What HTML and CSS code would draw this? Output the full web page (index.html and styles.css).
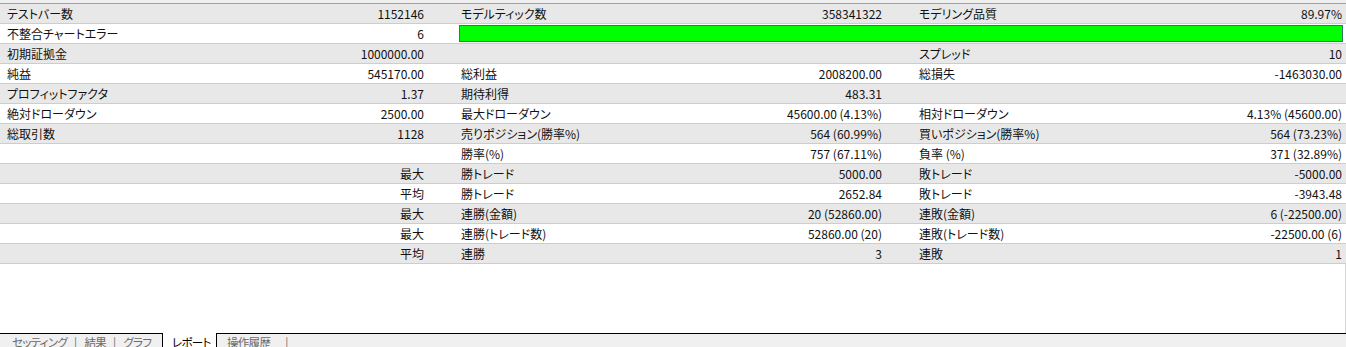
FILE: index.html
```html
<!DOCTYPE html>
<html lang="ja">
<head>
<meta charset="utf-8">
<title>レポート</title>
<link rel="stylesheet" href="styles.css">
</head>
<body>
<div class="top"></div>
<div class="report">
  <div class="row alt">
    <div class="l">テストバー数</div><div class="v">1152146</div>
    <div class="l2">モデルティック数</div><div class="v">358341322</div>
    <div class="l2">モデリング品質</div><div class="v3">89.97%</div>
  </div>
  <div class="row">
    <div class="l">不整合チャートエラー</div><div class="v">6</div>
    <div class="bar"></div>
  </div>
  <div class="row alt">
    <div class="l">初期証拠金</div><div class="v">1000000.00</div>
    <div class="l2"></div><div class="v"></div>
    <div class="l2">スプレッド</div><div class="v3">10</div>
  </div>
  <div class="row">
    <div class="l">純益</div><div class="v">545170.00</div>
    <div class="l2">総利益</div><div class="v">2008200.00</div>
    <div class="l2">総損失</div><div class="v3">-1463030.00</div>
  </div>
  <div class="row alt">
    <div class="l">プロフィットファクタ</div><div class="v">1.37</div>
    <div class="l2">期待利得</div><div class="v">483.31</div>
    <div class="l2"></div><div class="v3"></div>
  </div>
  <div class="row">
    <div class="l">絶対ドローダウン</div><div class="v">2500.00</div>
    <div class="l2">最大ドローダウン</div><div class="v">45600.00 (4.13%)</div>
    <div class="l2">相対ドローダウン</div><div class="v3">4.13% (45600.00)</div>
  </div>
  <div class="row alt">
    <div class="l">総取引数</div><div class="v">1128</div>
    <div class="l2">売りポジション(勝率%)</div><div class="v">564 (60.99%)</div>
    <div class="l2">買いポジション(勝率%)</div><div class="v3">564 (73.23%)</div>
  </div>
  <div class="row">
    <div class="l"></div><div class="v"></div>
    <div class="l2">勝率(%)</div><div class="v">757 (67.11%)</div>
    <div class="l2">負率 (%)</div><div class="v3">371 (32.89%)</div>
  </div>
  <div class="row alt">
    <div class="l"></div><div class="v">最大</div>
    <div class="l2">勝トレード</div><div class="v">5000.00</div>
    <div class="l2">敗トレード</div><div class="v3">-5000.00</div>
  </div>
  <div class="row">
    <div class="l"></div><div class="v">平均</div>
    <div class="l2">勝トレード</div><div class="v">2652.84</div>
    <div class="l2">敗トレード</div><div class="v3">-3943.48</div>
  </div>
  <div class="row alt">
    <div class="l"></div><div class="v">最大</div>
    <div class="l2">連勝(金額)</div><div class="v">20 (52860.00)</div>
    <div class="l2">連敗(金額)</div><div class="v3">6 (-22500.00)</div>
  </div>
  <div class="row">
    <div class="l"></div><div class="v">最大</div>
    <div class="l2">連勝(トレード数)</div><div class="v">52860.00 (20)</div>
    <div class="l2">連敗(トレード数)</div><div class="v3">-22500.00 (6)</div>
  </div>
  <div class="row alt">
    <div class="l"></div><div class="v">平均</div>
    <div class="l2">連勝</div><div class="v">3</div>
    <div class="l2">連敗</div><div class="v3">1</div>
  </div>
</div>
<div class="filler"></div>
<div class="tabs">
  <div class="tabs-left">
    <span class="tab">セッティング</span><span class="sep">|</span><span class="tab">結果</span><span class="sep">|</span><span class="tab">グラフ</span>
  </div>
  <div class="tab-active">レポート</div>
  <div class="tabs-right">
    <span class="tab">操作履歴</span><span class="sep sep-wide">|</span>
  </div>
</div>
</body>
</html>
```

FILE: styles.css
```css
* {
  box-sizing: border-box;
}

html, body {
  margin: 0;
  padding: 0;
}

body {
  width: 1346px;
  height: 347px;
  overflow: hidden;
  background: #ffffff;
  color: #111111;
  font-family: "Noto Sans CJK JP", "Noto Sans", sans-serif;
  font-size: 12px;
  font-feature-settings: "palt";
}

.top {
  height: 4px;
  background: #f0f0f0;
  border-bottom: 1px solid #a0a0a0;
}

.row {
  display: grid;
  grid-template-columns: 230px 228px 229px 229px 215px 215px;
  height: 20px;
  line-height: 19px;
  border-bottom: 1px solid #cdcdcd;
  background: #ffffff;
  white-space: nowrap;
}

.row.alt {
  background: #e8e8e8;
}

.l {
  padding-left: 7px;
}

.l2 {
  padding-left: 3px;
}

.v {
  text-align: right;
  padding-right: 34px;
}

.v3 {
  text-align: right;
  padding-right: 4px;
}

.bar {
  grid-column: 3 / 7;
  margin: 1px 3px 1px 1px;
  background: #00ff00;
  border: 1px solid #2f7a5c;
}

.filler {
  height: 69px;
  border-right: 1px solid #d6d6d6;
}

.tabs {
  display: flex;
  height: 20px;
  line-height: 16px;
  font-size: 11.5px;
  letter-spacing: -0.7px;
  background: #f0f0f0;
  white-space: nowrap;
}

.tabs-left {
  width: 162px;
  overflow: hidden;
  border-top: 1px solid #000000;
  padding-left: 12px;
  color: #6a6a6a;
}

.tab-active {
  width: 55px;
  background: #ffffff;
  border-left: 1px solid #000000;
  border-right: 1px solid #000000;
  padding-left: 9px;
  padding-top: 1px;
  color: #000000;
}

.tabs-right {
  flex: 1;
  border-top: 1px solid #000000;
  padding-left: 10px;
  color: #6a6a6a;
}

.sep {
  display: inline-block;
  margin: 0 8px 0 7px;
  color: #6a6a6a;
}

.sep-wide {
  margin-left: 15px;
}
```
